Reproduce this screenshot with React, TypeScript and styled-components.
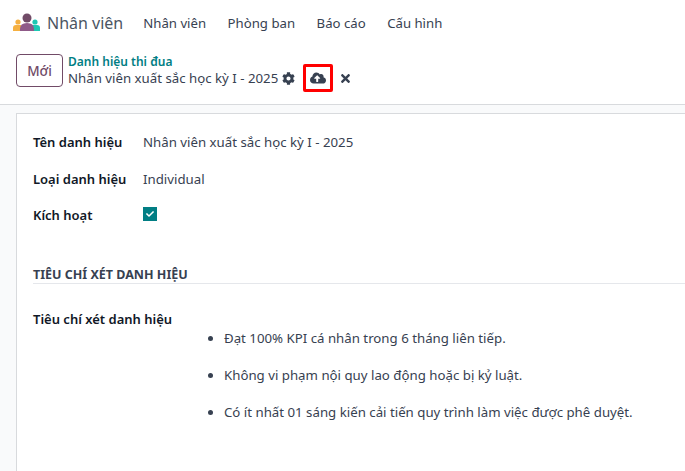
import React from "react";
import styled, { createGlobalStyle } from "styled-components";
import { FaCheck, FaCloudUploadAlt, FaCog, FaTimes } from "react-icons/fa";

const GlobalStyle = createGlobalStyle`
  html, body {
    margin: 0;
    padding: 0;
    height: 100%;
    overflow: hidden;
    background: #fff;
    font-family: "Noto Sans", "Open Sans", sans-serif;
    font-size: 13px;
    color: #374151;
  }
`;

const Page = styled.div`
  display: flex;
  flex-direction: column;
  width: 685px;
  height: 471px;
  overflow: hidden;
`;

const NavBar = styled.div`
  display: flex;
  align-items: center;
  height: 46px;
  padding-left: 13px;
`;

const Brand = styled.div`
  display: flex;
  align-items: center;
  gap: 7px;
  font-size: 16px;
  color: #4b5563;
  margin-right: 20px;
`;

const NavItem = styled.div`
  color: #374151;
  font-size: 13.2px;
  margin-right: 21.5px;
`;

const ControlPanel = styled.div`
  display: flex;
  align-items: center;
  height: 59px;
  padding: 0 0 9px 16px;
  border-bottom: 1px solid #d8dadd;
  box-sizing: border-box;
`;

const NewButton = styled.button`
  width: 47px;
  height: 33px;
  margin-right: 5px;
  padding: 0;
  background: #fff;
  border: 1px solid #714b67;
  border-radius: 4px;
  color: #714b67;
  font: 500 13.5px "Noto Sans", sans-serif;
`;

const Breadcrumb = styled.div`
  display: flex;
  flex-direction: column;
  line-height: 17px;
  font-size: 13.25px;
  margin-top: -1px;
`;

const ParentLink = styled.div`
  color: #017e84;
  font-weight: 600;
  font-size: 12px;
`;

const RecordRow = styled.div`
  display: flex;
  align-items: center;
  gap: 4px;
`;

const ActionIcons = styled.div`
  display: flex;
  align-items: center;
  margin: 15px 0 0 8px;
`;

const SaveButton = styled.div`
  display: flex;
  align-items: center;
  justify-content: center;
  width: 30px;
  height: 28px;
  box-sizing: border-box;
  border: 3px solid #f00;
  border-radius: 2px;
  margin-right: 6px;
`;

const Body = styled.div`
  flex: 1;
  background: #f9fafb;
  padding: 8px 0 0 16px;
`;

const Sheet = styled.div`
  height: 120%;
  box-sizing: border-box;
  background: #fff;
  border: 1px solid #d8dadd;
  border-right: 0;
  padding: 18px 0 0 16px;
`;

const Field = styled.div<{ $tight?: boolean }>`
  display: flex;
  align-items: center;
  height: 20px;
  margin-bottom: ${(p) => (p.$tight ? "16px" : "17px")};
`;

const Label = styled.div`
  width: 110px;
  font-weight: 600;
  color: #111827;
  font-size: 13px;
  white-space: nowrap;
`;

const Value = styled.div`
  color: #374151;
  font-size: 13.25px;
`;

const CheckBox = styled.div`
  display: flex;
  align-items: center;
  justify-content: center;
  width: 14px;
  height: 14px;
  margin-bottom: 3px;
  background: #017e84;
  color: #fff;
`;

const SectionTitle = styled.div`
  margin-top: 41px;
  border-bottom: 1px solid #e5e7eb;
  font-weight: 700;
  font-size: 12.5px;
  line-height: 17px;
  color: #374151;
`;

const CriteriaLabel = styled(Label)`
  margin-top: 26px;
`;

const Criteria = styled.ul`
  margin: 1px 0 0 191px;
  padding: 0;
  list-style: disc;
  color: #374151;
  font-size: 13.25px;
`;

const Criterion = styled.li`
  line-height: 18px;
  margin-bottom: 19px;
`;

const Logo = () => (
  <svg width="27" height="20" viewBox="0 0 27 20">
    <circle cx="14" cy="5" r="4.5" fill="#714b67" />
    <circle cx="5" cy="9" r="2.6" fill="#f5b041" />
    <circle cx="22" cy="9" r="2.6" fill="#1dc8b4" />
    <path d="M0 18v-3q0-3 3-3h5v6z" fill="#f5b041" />
    <path d="M27 18v-3q0-3-3-3h-5v6z" fill="#1dc8b4" />
    <path d="M7 18v-2q0-6 7-6t7 6v2z" fill="#8f5a88" />
  </svg>
);

const App: React.FC = () => {
  return (
    <Page>
      <GlobalStyle />
      <NavBar>
        <Brand>
          <Logo />
          Nhân viên
        </Brand>
        <NavItem>Nhân viên</NavItem>
        <NavItem>Phòng ban</NavItem>
        <NavItem>Báo cáo</NavItem>
        <NavItem>Cấu hình</NavItem>
      </NavBar>
      <ControlPanel>
        <NewButton>Mới</NewButton>
        <Breadcrumb>
          <ParentLink>Danh hiệu thi đua</ParentLink>
          <RecordRow>
            Nhân viên xuất sắc học kỳ I - 2025
            <FaCog size={13} color="#374151" />
          </RecordRow>
        </Breadcrumb>
        <ActionIcons>
          <SaveButton>
            <FaCloudUploadAlt size={16} color="#374151" />
          </SaveButton>
          <FaTimes size={13} color="#374151" />
        </ActionIcons>
      </ControlPanel>
      <Body>
        <Sheet>
          <Field>
            <Label>Tên danh hiệu</Label>
            <Value>Nhân viên xuất sắc học kỳ I - 2025</Value>
          </Field>
          <Field $tight>
            <Label>Loại danh hiệu</Label>
            <Value>Individual</Value>
          </Field>
          <Field>
            <Label>Kích hoạt</Label>
            <CheckBox>
              <FaCheck size={8} />
            </CheckBox>
          </Field>
          <SectionTitle>TIÊU CHÍ XÉT DANH HIỆU</SectionTitle>
          <CriteriaLabel>Tiêu chí xét danh hiệu</CriteriaLabel>
          <Criteria>
            <Criterion>Đạt 100% KPI cá nhân trong 6 tháng liên tiếp.</Criterion>
            <Criterion>Không vi phạm nội quy lao động hoặc bị kỷ luật.</Criterion>
            <Criterion>Có ít nhất 01 sáng kiến cải tiến quy trình làm việc được phê duyệt.</Criterion>
          </Criteria>
        </Sheet>
      </Body>
    </Page>
  );
};

export default App;
